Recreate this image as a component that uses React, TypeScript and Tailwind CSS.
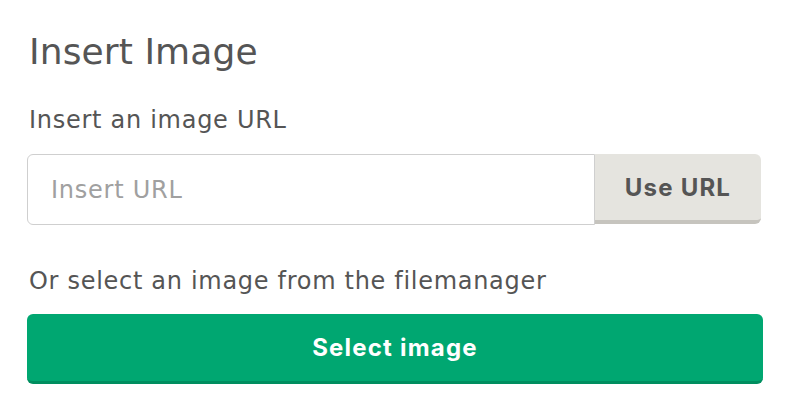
export default function App() {
  const body = { fontFamily: "'DejaVu Sans', 'Noto Sans', sans-serif" };
  const bold = { fontFamily: "Inter, 'Noto Sans', sans-serif" };
  return (
    <div className="w-[794px] h-[410px] bg-white px-[27px] pt-[30px] text-[#555555]" style={body}>
      <h1 className="text-[36px] leading-[44px] font-normal tracking-[0.1px] pl-[2px]">Insert Image</h1>
      <p className="mt-[30px] text-[24px] leading-[32px] tracking-[0.72px] pl-[2px]">Insert an image URL</p>
      <div className="mt-[18px] flex w-[734px] h-[71px]">
        <input
          type="text"
          placeholder="Insert URL"
          style={body}
          className="flex-1 min-w-0 h-[71px] border-[1.5px] border-[#cfcfcf] rounded-l-[6px] px-[23px] text-[24px] tracking-[0.75px] text-[#555] placeholder:text-[#a0a0a0] outline-none bg-white"
        />
        <button
          style={bold}
          className="w-[166px] h-[70px] pt-[2px] bg-[#e5e4df] border-b-[4px] border-[#c6c4be] rounded-r-[6px] text-[24px] font-bold tracking-[1.2px] text-[#555]"
        >
          Use URL
        </button>
      </div>
      <p className="mt-[40px] text-[24px] leading-[32px] tracking-[0.7px] pl-[2px]">Or select an image from the filemanager</p>
      <button
        style={bold}
        className="mt-[17px] w-[736px] h-[70px] pt-[1px] bg-[#00a771] border-b-[3px] border-[#008e5f] rounded-[6px] text-white text-[24px] font-bold tracking-[1.2px]"
      >
        Select image
      </button>
    </div>
  );
}
